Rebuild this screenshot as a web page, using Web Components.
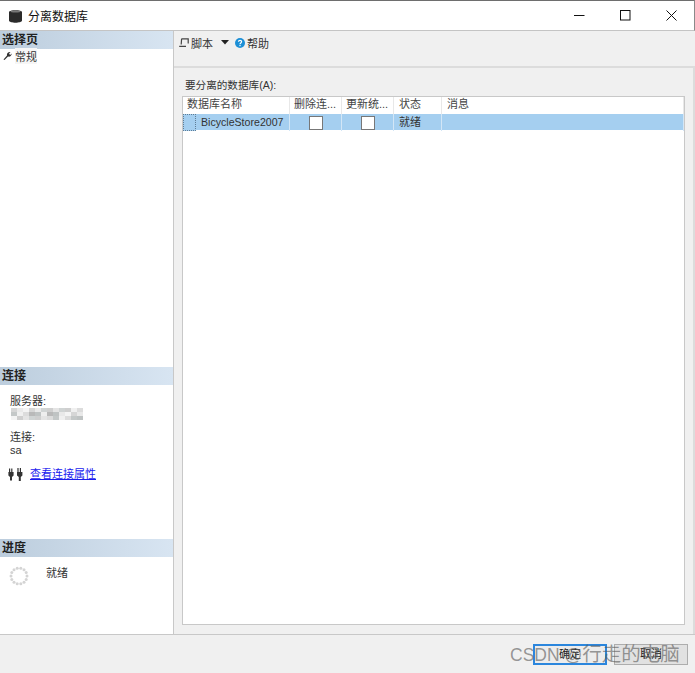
<!DOCTYPE html>
<html lang="zh">
<head>
<meta charset="utf-8">
<title>分离数据库</title>
<style>
  html, body { margin: 0; height: 100%; }
  body { font: 11px "Liberation Sans", "Noto Sans CJK SC", sans-serif; color: #333; }
</style>
</head>
<body>
<detach-dialog></detach-dialog>

<script>
// Title bar with caption and window buttons
class TitleBar extends HTMLElement {
  constructor() {
    super();
    this.attachShadow({ mode: 'open' });
  }

  connectedCallback() {
    this.shadowRoot.innerHTML = `
      <style>
        :host {
          display: flex;
          align-items: center;
          height: 29px;
          background: #fff;
          border-top: 1px solid #6e6e6e;
          border-right: 1px solid #8a8a8a;
          border-bottom: 1px solid #c4c4c4;
          padding-left: 9px;
          color: #111;
          font-size: 12px;
        }
        .cap { margin-left: 6px; flex: 1; }
        .btns { display: flex; }
        .btns div { width: 46px; height: 29px; display: flex; align-items: center; justify-content: center; }
        svg { display: block; }
      </style>
      <svg width="13" height="14" viewBox="0 0 13 14">
        <path d="M0 3C0 .6 13 .6 13 3V11.5C13 14.4 0 14.4 0 11.5Z" fill="#2b2b2b"/>
        <ellipse cx="6.5" cy="2.6" rx="5" ry="1" fill="#777"/>
      </svg>
      <span class="cap"><slot></slot></span>
      <div class="btns">
        <div><svg width="11" height="11"><path d="M0 5.5H10.5" stroke="#111"/></svg></div>
        <div><svg width="11" height="11"><rect x=".5" y=".5" width="9.5" height="9.5" fill="none" stroke="#111"/></svg></div>
        <div><svg width="11" height="11"><path d="M.5 .5L10.5 10.5M10.5 .5L.5 10.5" stroke="#111"/></svg></div>
      </div>
    `;
  }
}

// Left panel section with gradient heading
class SideSection extends HTMLElement {
  constructor() {
    super();
    this.attachShadow({ mode: 'open' });
  }

  connectedCallback() {
    this.shadowRoot.innerHTML = `
      <style>
        :host { display: block; }
        h2 {
          margin: 0;
          height: 18px;
          line-height: 18px;
          padding-left: 2px;
          font-size: 12px;
          font-weight: bold;
          color: #222;
          background: linear-gradient(90deg, #bccddd, #d8e5f2);
        }
      </style>
      <h2>${this.getAttribute('heading')}</h2>
      <slot></slot>
    `;
  }
}

// The toolbar over the form
class ScriptToolbar extends HTMLElement {
  constructor() {
    super();
    this.attachShadow({ mode: 'open' });
  }

  connectedCallback() {
    this.shadowRoot.innerHTML = `
      <style>
        :host {
          display: flex;
          align-items: center;
          height: 23px;
          padding: 0 0 12px 5px;
          border-bottom: 2px solid #dcdcdc;
          background: #f0f0f0;
          color: #333;
        }
        svg { display: block; }
        .t { margin-left: 2px; }
        .arrow { margin: 0 6px 0 8px; }
      </style>
      <svg width="10" height="10" viewBox="0 0 10 10"><path d="M2.5 .8H9.2V5.5M2.6 .8L2.2 6.5M.2 8.4H7" fill="none" stroke="#444" stroke-width="1.2"/></svg>
      <span class="t">脚本</span>
      <svg class="arrow" width="8" height="5"><path d="M0 0H8L4 4.5Z" fill="#222"/></svg>
      <svg width="10" height="10" viewBox="0 0 10 10"><circle cx="5" cy="5" r="5" fill="#1c8fd6"/><path d="M3.4 3.8C3.6 2 6.6 2 6.6 3.8C6.6 5 5 4.9 5 6.2" fill="none" stroke="#fff" stroke-width="1.2"/><rect x="4.4" y="7" width="1.2" height="1.2" fill="#fff"/></svg>
      <span class="t">帮助</span>
    `;
  }
}

// Single row grid of databases
class DatabaseGrid extends HTMLElement {
  constructor() {
    super();
    this.attachShadow({ mode: 'open' });
  }

  connectedCallback() {
    const cols = '107px 52px 52px 48px 1fr';
    this.shadowRoot.innerHTML = `
      <style>
        :host {
          display: block;
          flex: 1;
          background: #fff;
          border: 1px solid #c8c8c8;
          color: #444;
        }
        .row { display: grid; grid-template-columns: ${cols}; }
        .head { height: 17px; }
        .head div { border-right: 1px solid #e8e8e8; padding-left: 4px; line-height: 15px; white-space: nowrap; overflow: hidden; }
        .head div:nth-child(4), .head div:nth-child(5) { padding-left: 5px; }
        .sel { height: 16px; background: #a5cff0; }
        .sel > div { border-right: 1px solid #d3e6f6; line-height: 16px; padding-left: 5px; color: #333; }
        .sel .name { display: flex; padding-left: 0; font-size: 10.6px; }
        .mark { width: 11px; height: 15px; border: 1px dotted #5f7d96; background: #a5cff0; margin-right: 5px; flex: none; }
        .chk { display: flex; align-items: center; justify-content: center; padding-left: 0 !important; }
        .chk span { width: 12px; height: 12px; background: #fff; border: 1px solid #777; }
      </style>
      <div class="row head">
        <div>数据库名称</div><div>删除连...</div><div>更新统...</div><div>状态</div><div>消息</div>
      </div>
      <div class="row sel">
        <div class="name"><span class="mark"></span>BicycleStore2007</div>
        <div class="chk"><span></span></div>
        <div class="chk"><span></span></div>
        <div>就绪</div>
        <div></div>
      </div>
    `;
  }
}

// The whole dialog
class DetachDialog extends HTMLElement {
  constructor() {
    super();
    this.attachShadow({ mode: 'open' });
  }

  connectedCallback() {
    let mosaic = '';
    const tones = ['#d6d6d6','#eee','#c4c8c8','#e4e4e4','#f4f4f4','#bfc3c3','#dcdcdc','#cfcfcf','#e9e9e9','#b9b9b9','#f0f0f0','#d0d4d4'];
    for (let i = 0; i < 36; i++) {
      mosaic += `<i style="background:${tones[(i * 7 + (i % 5)) % tones.length]}"></i>`;
    }
    let dots = '';
    for (let i = 0; i < 14; i++) {
      const a = i * Math.PI / 7;
      dots += `<circle cx="${(10 + 8 * Math.cos(a)).toFixed(1)}" cy="${(10 + 8 * Math.sin(a)).toFixed(1)}" r="1.5" fill="#d4d4d4"/>`;
    }
    this.shadowRoot.innerHTML = `
      <style>
        :host { display: flex; flex-direction: column; width: 695px; height: 673px; background: #f0f0f0; overflow: hidden; position: relative; }
        .main { display: flex; height: 603px; border-bottom: 1px solid #c8c8c8; }
        .left { display: flex; flex-direction: column; width: 173px; background: #fff; border-right: 1px solid #c8c8c8; }
        .grow { flex: 1; }
        .page { display: flex; align-items: center; height: 13px; padding-left: 3px; color: #333; gap: 3px; }
        .page span { background: #f6f6f6; }
        .conn { height: 154px; padding: 10px 0 0 10px; box-sizing: border-box; line-height: 13px; color: #333; }
        .conn p { margin: 0; }
        .mosaic { display: grid; grid-template-columns: repeat(12, 6px); grid-auto-rows: 4px; width: 72px; margin: 0 0 11px 1px; filter: blur(.5px); }
        .link { display: flex; align-items: center; margin: 10px 0 0 -2px; gap: 7px; }
        a { color: #1a1aee; text-decoration: underline; }
        .prog { height: 77px; display: flex; padding: 9px 0 0 9px; box-sizing: border-box; }
        .prog span { margin: -2px 0 0 17px; }
        .right { flex: 1; display: flex; flex-direction: column; min-width: 0; }
        .form { flex: 1; display: flex; flex-direction: column; padding: 9px 8px 9px 8px; border-right: 2px solid #dcdcdc; }
        .lab { height: 19px; padding-left: 3px; font-size: 10.6px; color: #333; }
        .foot { flex: 1; display: flex; justify-content: flex-end; align-items: flex-start; gap: 7px; padding: 9px 7px 0 0; }
        .btn { width: 74px; height: 21px; box-sizing: border-box; text-align: center; line-height: 19px; background: #e1e1e1; border: 1px solid #adadad; color: #222; }
        .btn.def { border: 2px solid #2b86dd; line-height: 17px; background: #ececec; }
        .mark {
          position: absolute; left: 510px; top: 642px;
          font: 17.5px/24px "Liberation Sans", "Noto Sans CJK SC", sans-serif;
          color: rgba(90, 90, 90, .62); white-space: nowrap;
        }
        .mark span { font-size: 19.5px; }
      </style>
      <title-bar>分离数据库</title-bar>
      <div class="main">
        <div class="left">
          <side-section class="grow" heading="选择页">
            <div class="page">
              <svg width="9" height="9" viewBox="0 0 9 9"><path d="M.5 8.5L4 4.5C3.5 2.5 5 .8 7.5 1L6 2.8L7.2 4L8.7 2.5C8.7 5 6.8 6 5 5.5L1.5 9Z" fill="#333"/></svg>
              <span>常规</span>
            </div>
          </side-section>
          <side-section heading="连接">
            <div class="conn">
              <p>服务器:</p>
              <div class="mosaic">${mosaic}</div>
              <p>连接:</p>
              <p>sa</p>
              <div class="link">
                <svg width="15" height="15" viewBox="0 0 15 15"><path d="M1 1.5H2.2V5H3.2V1.5H4.4V5H5.6V8.5L4 10V13.5H2V10L.4 8.5V5H1ZM9.4 1H10.6V5H11.8V1H13V5H14.4V8.5L12.8 10V14H10.8V10L9 8.5V5H9.4Z" fill="#333"/></svg>
                <a href="#">查看连接属性</a>
              </div>
            </div>
          </side-section>
          <side-section heading="进度">
            <div class="prog">
              <svg width="20" height="20">${dots}</svg>
              <span>就绪</span>
            </div>
          </side-section>
        </div>
        <div class="right">
          <script-toolbar></script-toolbar>
          <div class="form">
            <div class="lab">要分离的数据库(A):</div>
            <database-grid></database-grid>
          </div>
        </div>
      </div>
      <div class="foot">
        <div class="btn def">确定</div>
        <div class="btn">取消</div>
      </div>
      <div class="mark">CSDN @<span>行走的电脑</span></div>
    `;
  }
}

customElements.define('title-bar', TitleBar);
customElements.define('side-section', SideSection);
customElements.define('script-toolbar', ScriptToolbar);
customElements.define('database-grid', DatabaseGrid);
customElements.define('detach-dialog', DetachDialog);
</script>
</body>
</html>
